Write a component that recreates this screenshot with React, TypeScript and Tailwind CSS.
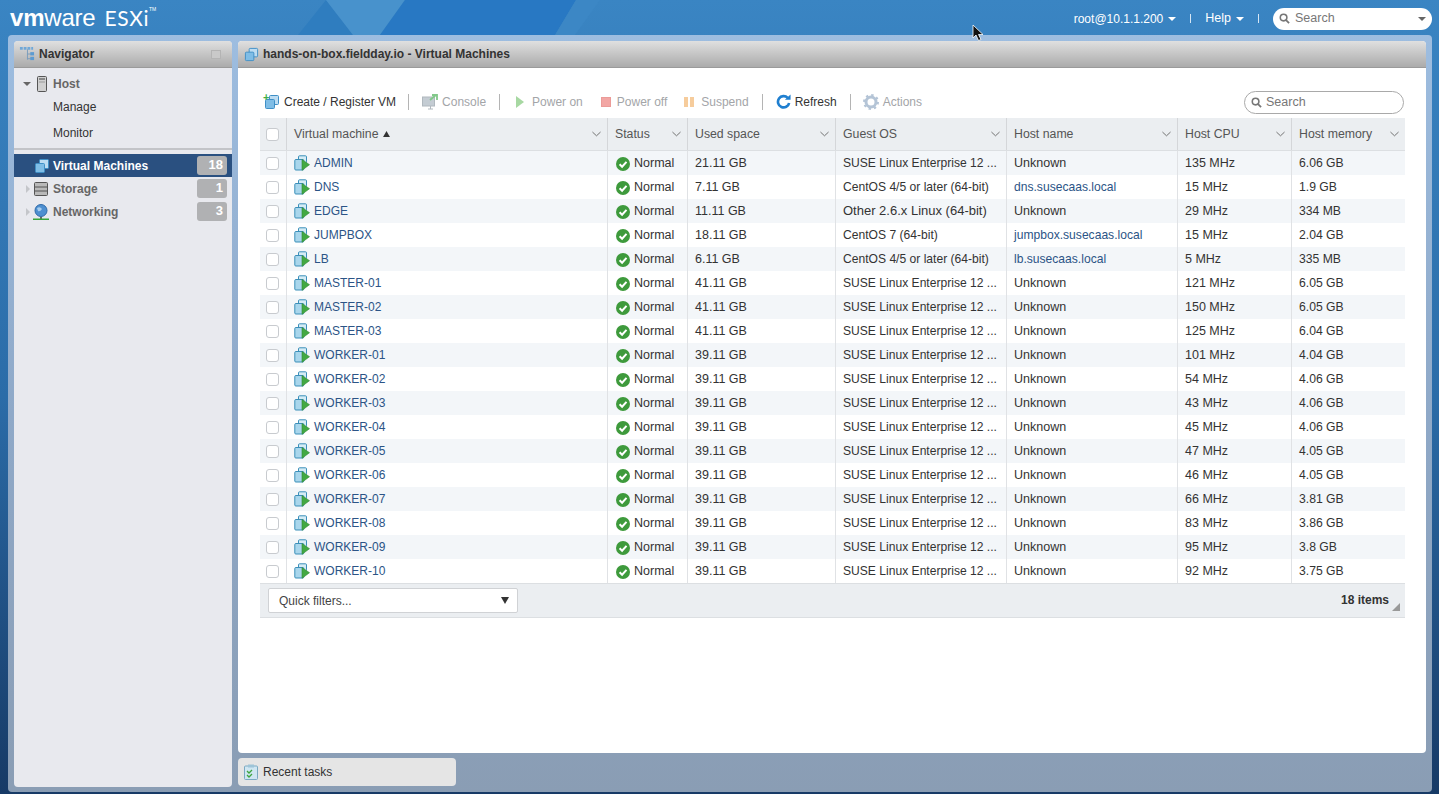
import React from "react";

type Vm = [string, string, string, string, boolean, string, string];
const SUSE = "SUSE Linux Enterprise 12 ...";
const vms: Vm[] = [
  ["ADMIN", "21.11 GB", SUSE, "Unknown", false, "135 MHz", "6.06 GB"],
  ["DNS", "7.11 GB", "CentOS 4/5 or later (64-bit)", "dns.susecaas.local", true, "15 MHz", "1.9 GB"],
  ["EDGE", "11.11 GB", "Other 2.6.x Linux (64-bit)", "Unknown", false, "29 MHz", "334 MB"],
  ["JUMPBOX", "18.11 GB", "CentOS 7 (64-bit)", "jumpbox.susecaas.local", true, "15 MHz", "2.04 GB"],
  ["LB", "6.11 GB", "CentOS 4/5 or later (64-bit)", "lb.susecaas.local", true, "5 MHz", "335 MB"],
  ["MASTER-01", "41.11 GB", SUSE, "Unknown", false, "121 MHz", "6.05 GB"],
  ["MASTER-02", "41.11 GB", SUSE, "Unknown", false, "150 MHz", "6.05 GB"],
  ["MASTER-03", "41.11 GB", SUSE, "Unknown", false, "125 MHz", "6.04 GB"],
  ["WORKER-01", "39.11 GB", SUSE, "Unknown", false, "101 MHz", "4.04 GB"],
  ["WORKER-02", "39.11 GB", SUSE, "Unknown", false, "54 MHz", "4.06 GB"],
  ["WORKER-03", "39.11 GB", SUSE, "Unknown", false, "43 MHz", "4.06 GB"],
  ["WORKER-04", "39.11 GB", SUSE, "Unknown", false, "45 MHz", "4.06 GB"],
  ["WORKER-05", "39.11 GB", SUSE, "Unknown", false, "47 MHz", "4.05 GB"],
  ["WORKER-06", "39.11 GB", SUSE, "Unknown", false, "46 MHz", "4.05 GB"],
  ["WORKER-07", "39.11 GB", SUSE, "Unknown", false, "66 MHz", "3.81 GB"],
  ["WORKER-08", "39.11 GB", SUSE, "Unknown", false, "83 MHz", "3.86 GB"],
  ["WORKER-09", "39.11 GB", SUSE, "Unknown", false, "95 MHz", "3.8 GB"],
  ["WORKER-10", "39.11 GB", SUSE, "Unknown", false, "92 MHz", "3.75 GB"],
];

const GRID = "grid grid-cols-[27px_321px_80px_148px_171px_171px_114px_113px]";

function Stack({ className = "" }: { className?: string }) {
  return (
    <svg viewBox="0 0 16 16" className={className}>
      <rect x="5.5" y="1.5" width="9" height="9" rx="1" fill="#bcdcf2" stroke="#3f8fc6" />
      <rect x="1.5" y="5.5" width="9" height="9" rx="1" fill="#7fbde6" stroke="#3f8fc6" />
    </svg>
  );
}

function VmIcon() {
  return (
    <svg viewBox="0 0 16 16" className="w-[16px] h-[16px] shrink-0">
      <rect x="4.5" y="0.8" width="8" height="7" rx="1" fill="#d5ebf5" stroke="#3b8fb9" />
      <rect x="0.8" y="4.5" width="9" height="10.5" rx="1" fill="#a9d6ec" stroke="#3b8fb9" />
      <path d="M8 4.5 L15.5 9.7 L8 15.3 Z" fill="#43a943" stroke="#2f8a35" strokeWidth="0.6" />
    </svg>
  );
}

function StatusIcon() {
  return (
    <svg viewBox="0 0 14 14" className="w-[14px] h-[14px] shrink-0 mt-[2px]">
      <circle cx="7" cy="7" r="7" fill="#3e9a3c" />
      <path d="M3.6 7.2 L6.1 9.7 L10.5 4.8" fill="none" stroke="#fff" strokeWidth="2" />
    </svg>
  );
}

function Chevron() {
  return (
    <svg viewBox="0 0 10 6" className="absolute right-[6px] top-1/2 -translate-y-1/2 w-[9px] h-[6px]">
      <path d="M0.5 0.8 L5 5 L9.5 0.8" fill="none" stroke="#666" strokeWidth="1" />
    </svg>
  );
}

function Check() {
  return <span className="block w-[13px] h-[13px] rounded-[3px] border border-[#c8cbcf] bg-white" />;
}

function SearchGlyph({ className = "" }: { className?: string }) {
  return (
    <svg viewBox="0 0 12 12" className={className}>
      <circle cx="5" cy="5" r="3.6" fill="none" stroke="#777" strokeWidth="1.7" />
      <path d="M7.7 7.7 L11 11" stroke="#777" strokeWidth="2" />
    </svg>
  );
}

function Caret({ color = "#fff" }: { color?: string }) {
  return (
    <svg viewBox="0 0 8 4" className="block w-[8px] h-[4px] shrink-0">
      <path d="M0 0 H8 L4 4 Z" fill={color} />
    </svg>
  );
}

function NavArrow() {
  return (
    <svg viewBox="0 0 4 8" className="w-[4px] h-[8px] shrink-0">
      <path d="M0 0 L4 4 L0 8 Z" fill="#c4c6ca" />
    </svg>
  );
}

function Badge({ n }: { n: number }) {
  return (
    <span className="ml-auto mr-[5px] w-[30px] h-[19px] rounded-[3px] bg-[#b0b1b3] text-white font-bold text-[13px] text-right pr-[4px] leading-[18px]">
      {n}
    </span>
  );
}

function Sep() {
  return <span className="block w-px h-[16px] bg-[#b4b4b4]" />;
}

function ToolText({ children, dim }: { children: React.ReactNode; dim?: boolean }) {
  return <span className={dim ? "text-[#a3a5a8]" : "text-[#333]"}>{children}</span>;
}

export default function App() {
  return (
    <div className="relative h-screen w-full overflow-hidden flex flex-col font-['Liberation_Sans',Arial,sans-serif] text-[12px] text-[#333] bg-gradient-to-b from-[#3a85c3] via-[#2b6ca8] to-[#173a66]">
      {/* Banner */}
      <header className="relative h-[35px] shrink-0 flex items-center text-white">
        <svg viewBox="0 0 1439 35" className="absolute inset-0 w-full h-full">
          <polygon points="326,0 353,35 298,35" fill="#2f7dbf" />
          <polygon points="326,0 405,0 380,35 353,35" fill="#4892cc" />
          <polygon points="405,0 576,0 555,35 380,35" fill="#2878c3" />
          <polygon points="576,0 600,0 575,35 555,35" fill="#3c87c5" />
        </svg>
        <div className="relative ml-[10px] flex items-baseline leading-none">
          <span className="text-[24px] tracking-[-0.2px]">
            <span className="font-bold">vm</span>ware
          </span>
          <span className="ml-[9px] font-['Lato',sans-serif] text-[21px] tracking-[0.6px]">ESXi</span>
          <span className="text-[5px] self-start mt-[1px]">TM</span>
        </div>
        <div className="relative ml-auto pt-[2px] flex items-center text-[12px]">
          <span>root@10.1.1.200</span>
          <span className="ml-[5px]"><Caret /></span>
          <span className="ml-[14px] w-px h-[9px] bg-[#d6e6f4]" />
          <span className="ml-[14px] text-[12.5px]">Help</span>
          <span className="ml-[5px]"><Caret /></span>
          <span className="ml-[14px] w-px h-[9px] bg-[#d6e6f4]" />
          <div className="ml-[14px] mr-[7px] w-[159px] h-[22px] rounded-full bg-white flex items-center pl-[6px] pr-[6px] text-[#777] text-[12.5px]">
            <SearchGlyph className="w-[11px] h-[11px] shrink-0" />
            <span className="ml-[5px]">Search</span>
            <span className="ml-auto"><Caret color="#666" /></span>
          </div>
        </div>
      </header>

      {/* Frame */}
      <div className="flex-1 min-h-0 ml-[8px] mr-[7px] mb-[2px] rounded-[4px] p-[6px] pb-[5px] flex gap-[6px] bg-gradient-to-b from-[#9dbde0] via-[#8fa9c8] to-[#8a9db4]">
        {/* Navigator */}
        <aside className="w-[218px] shrink-0 rounded-[4px] bg-[#e8e9ee] overflow-hidden flex flex-col">
          <div className="h-[27px] shrink-0 flex items-center pl-[5px] pr-[11px] border-b border-[#9a9a9a] bg-gradient-to-b from-[#e0e0e0] to-[#ababab]">
            <svg viewBox="0 0 17 16" className="w-[16px] h-[16px] shrink-0">
              <path d="M1 2 H15" stroke="#6fa8d8" strokeWidth="3" strokeDasharray="3 1" />
              <path d="M9 3 V14 M9 8 H13 M9 13 H13" stroke="#7a9cbc" fill="none" />
              <rect x="12" y="6" width="4" height="3.5" fill="#5c9bd1" />
              <rect x="12" y="11" width="4" height="3.5" fill="#5c9bd1" />
            </svg>
            <span className="ml-[4px] font-bold text-[#333]">Navigator</span>
            <span className="ml-auto w-[10px] h-[9px] border border-[#b4b4b4] bg-[#c9c9c9]" />
          </div>
          <div className="h-[82px] shrink-0 border-b-2 border-[#c3c4c8]">
            <div className="h-[31px] flex items-center pl-[9px] pt-[1px]">
              <Caret color="#666" />
              <svg viewBox="0 0 10 16" className="ml-[6px] w-[10px] h-[16px]">
                <rect x="0.5" y="0.5" width="9" height="15" rx="1" fill="#d0d0d0" stroke="#555" />
                <rect x="2" y="2" width="6" height="2" fill="#888" />
                <rect x="2" y="5.5" width="6" height="1" fill="#999" />
              </svg>
              <span className="ml-[6px] font-bold text-[#666]">Host</span>
            </div>
            <div className="pl-[39px] h-[14px] leading-[14px] mt-[1px]">Manage</div>
            <div className="pl-[39px] h-[14px] leading-[14px] mt-[12px]">Monitor</div>
          </div>
          <div className="mt-[4px] h-[23px] flex items-center bg-[#2a5080] text-white font-bold pl-[12px]">
            <span className="w-[4px]" />
            <Stack className="ml-[4px] w-[16px] h-[16px] shrink-0" />
            <span className="ml-[3px]">Virtual Machines</span>
            <Badge n={18} />
          </div>
          <div className="h-[23px] flex items-center text-[#666] font-bold pl-[12px]">
            <NavArrow />
            <svg viewBox="0 0 14 14" className="ml-[4px] w-[14px] h-[14px] shrink-0">
              <rect x="0.5" y="0.5" width="13" height="13" rx="1" fill="#b9b9b9" stroke="#555" />
              <path d="M1 5 H13 M1 9 H13" stroke="#555" />
            </svg>
            <span className="ml-[5px]">Storage</span>
            <Badge n={1} />
          </div>
          <div className="h-[23px] flex items-center text-[#666] font-bold pl-[12px]">
            <NavArrow />
            <svg viewBox="0 0 16 16" className="ml-[3px] w-[16px] h-[16px] shrink-0">
              <circle cx="8" cy="6.5" r="6" fill="#4e8fd0" stroke="#2f6aa8" />
              <path d="M4 4 Q7 2 9 5 Q7 8 5 7 Z" fill="#a7cdee" />
              <path d="M8 13 V15" stroke="#666" strokeWidth="2" />
              <rect x="0" y="14.5" width="16" height="1.5" fill="#36a53a" />
            </svg>
            <span className="ml-[4px]">Networking</span>
            <Badge n={3} />
          </div>
        </aside>

        {/* Right column */}
        <div className="flex-1 min-w-0 flex flex-col gap-[5px]">
          <main className="flex-1 min-h-0 rounded-[4px] bg-white overflow-hidden flex flex-col">
            <div className="h-[27px] shrink-0 flex items-center pl-[6px] border-b border-[#9a9a9a] bg-gradient-to-b from-[#e0e0e0] to-[#ababab]">
              <Stack className="w-[15px] h-[15px] shrink-0" />
              <span className="ml-[4px] font-bold text-[#333]">hands-on-box.fieldday.io - Virtual Machines</span>
            </div>
            <div className="pl-[22px] pr-[21px] flex flex-col">
              {/* Toolbar */}
              <div className="h-[50px] flex items-center pl-[4px] pt-[17px]">
                <span className="relative w-[16px] h-[16px] shrink-0">
                  <Stack className="w-[16px] h-[16px]" />
                  <span className="absolute -left-[1px] -top-[1px] text-[#3fae49] font-bold text-[11px] leading-[8px]">+</span>
                </span>
                <span className="ml-[4px]"><ToolText>Create / Register VM</ToolText></span>
                <span className="ml-[12px]"><Sep /></span>
                <svg viewBox="0 0 16 16" className="ml-[13px] w-[16px] h-[16px] shrink-0">
                  <rect x="0.5" y="3" width="12" height="9" fill="#c4ccd3" stroke="#b0b8be" />
                  <path d="M6 15 H11 M8.5 12 V15" stroke="#b0b8be" />
                  <path d="M8 6 L14 1 M10 1 H15 V6" stroke="#82c98a" strokeWidth="1.8" fill="none" />
                </svg>
                <span className="ml-[4px]"><ToolText dim>Console</ToolText></span>
                <span className="ml-[13px]"><Sep /></span>
                <svg viewBox="0 0 8 12" className="ml-[16px] w-[8px] h-[12px] shrink-0">
                  <path d="M0 0 L8 6 L0 12 Z" fill="#a7d8a2" />
                </svg>
                <span className="ml-[8px]"><ToolText dim>Power on</ToolText></span>
                <span className="ml-[18px] w-[10px] h-[10px] bg-[#f2a6a4] border border-[#eb9b98] shrink-0" />
                <span className="ml-[6px]"><ToolText dim>Power off</ToolText></span>
                <span className="ml-[17px] flex gap-[2px] shrink-0">
                  <span className="w-[4px] h-[10px] bg-[#f6cc9c]" />
                  <span className="w-[4px] h-[10px] bg-[#f6cc9c]" />
                </span>
                <span className="ml-[7px]"><ToolText dim>Suspend</ToolText></span>
                <span className="ml-[13px]"><Sep /></span>
                <svg viewBox="0 0 16 16" className="ml-[13px] w-[15px] h-[15px] shrink-0">
                  <path d="M12.5 4.2 A6 6 0 1 0 14 9.5" fill="none" stroke="#1f7fd0" strokeWidth="2.8" />
                  <path d="M9.5 6 H15.5 V0.5 Z" fill="#1f7fd0" />
                </svg>
                <span className="ml-[4px]"><ToolText>Refresh</ToolText></span>
                <span className="ml-[13px]"><Sep /></span>
                <svg viewBox="0 0 16 16" className="ml-[12px] w-[16px] h-[16px] shrink-0">
                  <circle cx="8" cy="8" r="5" fill="none" stroke="#b4c4d6" strokeWidth="3" />
                  <circle cx="8" cy="8" r="7" fill="none" stroke="#b4c4d6" strokeWidth="2" strokeDasharray="2.4 3.1" />
                </svg>
                <span className="ml-[4px]"><ToolText dim>Actions</ToolText></span>
                <div className="ml-auto mr-[1px] translate-y-[1px] w-[160px] h-[23px] rounded-full border border-[#a9a9a9] bg-white flex items-center pl-[6px] text-[#777] text-[12.5px]">
                  <SearchGlyph className="w-[11px] h-[11px] shrink-0" />
                  <span className="ml-[4px]">Search</span>
                </div>
              </div>

              {/* Table */}
              <div className="border-b border-[#dcdfe2]">
                <div className={`${GRID} h-[33px] bg-[#ebeef1] text-[#555] text-[12.3px] border-b border-[#dcdfe2]`}>
                  <div className="flex items-center justify-center border-r border-[#d4d6d9] pr-[1px]"><Check /></div>
                  {["Virtual machine", "Status", "Used space", "Guest OS", "Host name", "Host CPU", "Host memory"].map((h, i) => (
                    <div key={h} className="relative flex items-center pl-[7px] border-r border-[#d4d6d9] last:border-r-0">
                      {h}
                      {i === 0 && (
                        <svg viewBox="0 0 8 7" className="w-[7px] h-[6px] ml-[4px]"><path d="M4 0 L8 7 H0 Z" fill="#333" /></svg>
                      )}
                      <Chevron />
                    </div>
                  ))}
                </div>
                {vms.map((v, i) => (
                  <div key={v[0]} className={`${GRID} h-[24px] leading-[24px] ${i % 2 === 0 ? "bg-[#f3f6f9]" : "bg-white"}`}>
                    <div className="flex items-center justify-center border-r border-[#e0e2e5] pr-[1px]"><Check /></div>
                    <div className="flex items-center pl-[7px] border-r border-[#e0e2e5] text-[#2b5486]">
                      <VmIcon />
                      <span className="ml-[4px]">{v[0]}</span>
                    </div>
                    <div className="flex items-center pl-[8px] border-r border-[#e0e2e5] text-[12.5px]">
                      <StatusIcon />
                      <span className="ml-[4px]">Normal</span>
                    </div>
                    <div className="pl-[7px] border-r border-[#e0e2e5] text-[12.5px]">{v[1]}</div>
                    <div className={`pl-[7px] border-r border-[#e0e2e5] whitespace-nowrap overflow-hidden ${v[2].startsWith("Other") ? "text-[13px]" : "text-[12.1px]"}`}>{v[2]}</div>
                    <div className={`pl-[7px] border-r border-[#e0e2e5] ${v[4] ? "text-[#2b5486] text-[12.1px]" : "text-[12.5px]"}`}>{v[3]}</div>
                    <div className="pl-[7px] border-r border-[#e0e2e5] text-[12.5px]">{v[5]}</div>
                    <div className="pl-[7px] text-[12.2px]">{v[6]}</div>
                  </div>
                ))}
                <div className="relative h-[34px] bg-[#ebeef1] border-t border-[#dcdfe2] flex items-start pl-[8px] pr-[16px] pt-[4px]">
                  <div className="w-[250px] h-[25px] rounded-[2px] bg-white border border-[#d0d2d5] flex items-center pl-[10px] pr-[8px] text-[#444]">
                    Quick filters...
                    <svg viewBox="0 0 8 7" className="ml-auto w-[8px] h-[7px]"><path d="M0 0 H8 L4 7 Z" fill="#333" /></svg>
                  </div>
                  <span className="ml-auto font-bold leading-[24px]">18 items</span>
                  <svg viewBox="0 0 8 8" className="absolute right-[5px] bottom-[6px] w-[8px] h-[8px]">
                    <path d="M8 0 V8 H0 Z" fill="#999" />
                  </svg>
                </div>
              </div>
            </div>
          </main>
          <div className="h-[28px] w-[218px] mb-[1px] shrink-0 rounded-[4px] bg-[#e5e5e5] flex items-center pl-[6px]">
            <svg viewBox="0 0 14 16" className="w-[14px] h-[16px] shrink-0">
              <rect x="0.5" y="2" width="13" height="13.5" rx="1" fill="#cfe6f2" stroke="#7aa9c2" />
              <rect x="4" y="0.5" width="6" height="3" fill="#9dc4d8" />
              <path d="M3 7 L5 9 L8 6 M3 11 L5 13 L8 10" fill="none" stroke="#3ea53e" strokeWidth="1.3" />
            </svg>
            <span className="ml-[5px]">Recent tasks</span>
          </div>
        </div>
      </div>

      {/* Mouse cursor */}
      <svg viewBox="0 0 12 18" className="absolute left-[972px] top-[24px] w-[12px] h-[18px]">
        <path d="M1 1 V14 L4 11 L6.5 16.5 L9 15.5 L6.5 10.5 H11 Z" fill="#111" stroke="#fff" strokeWidth="0.8" />
      </svg>
    </div>
  );
}
